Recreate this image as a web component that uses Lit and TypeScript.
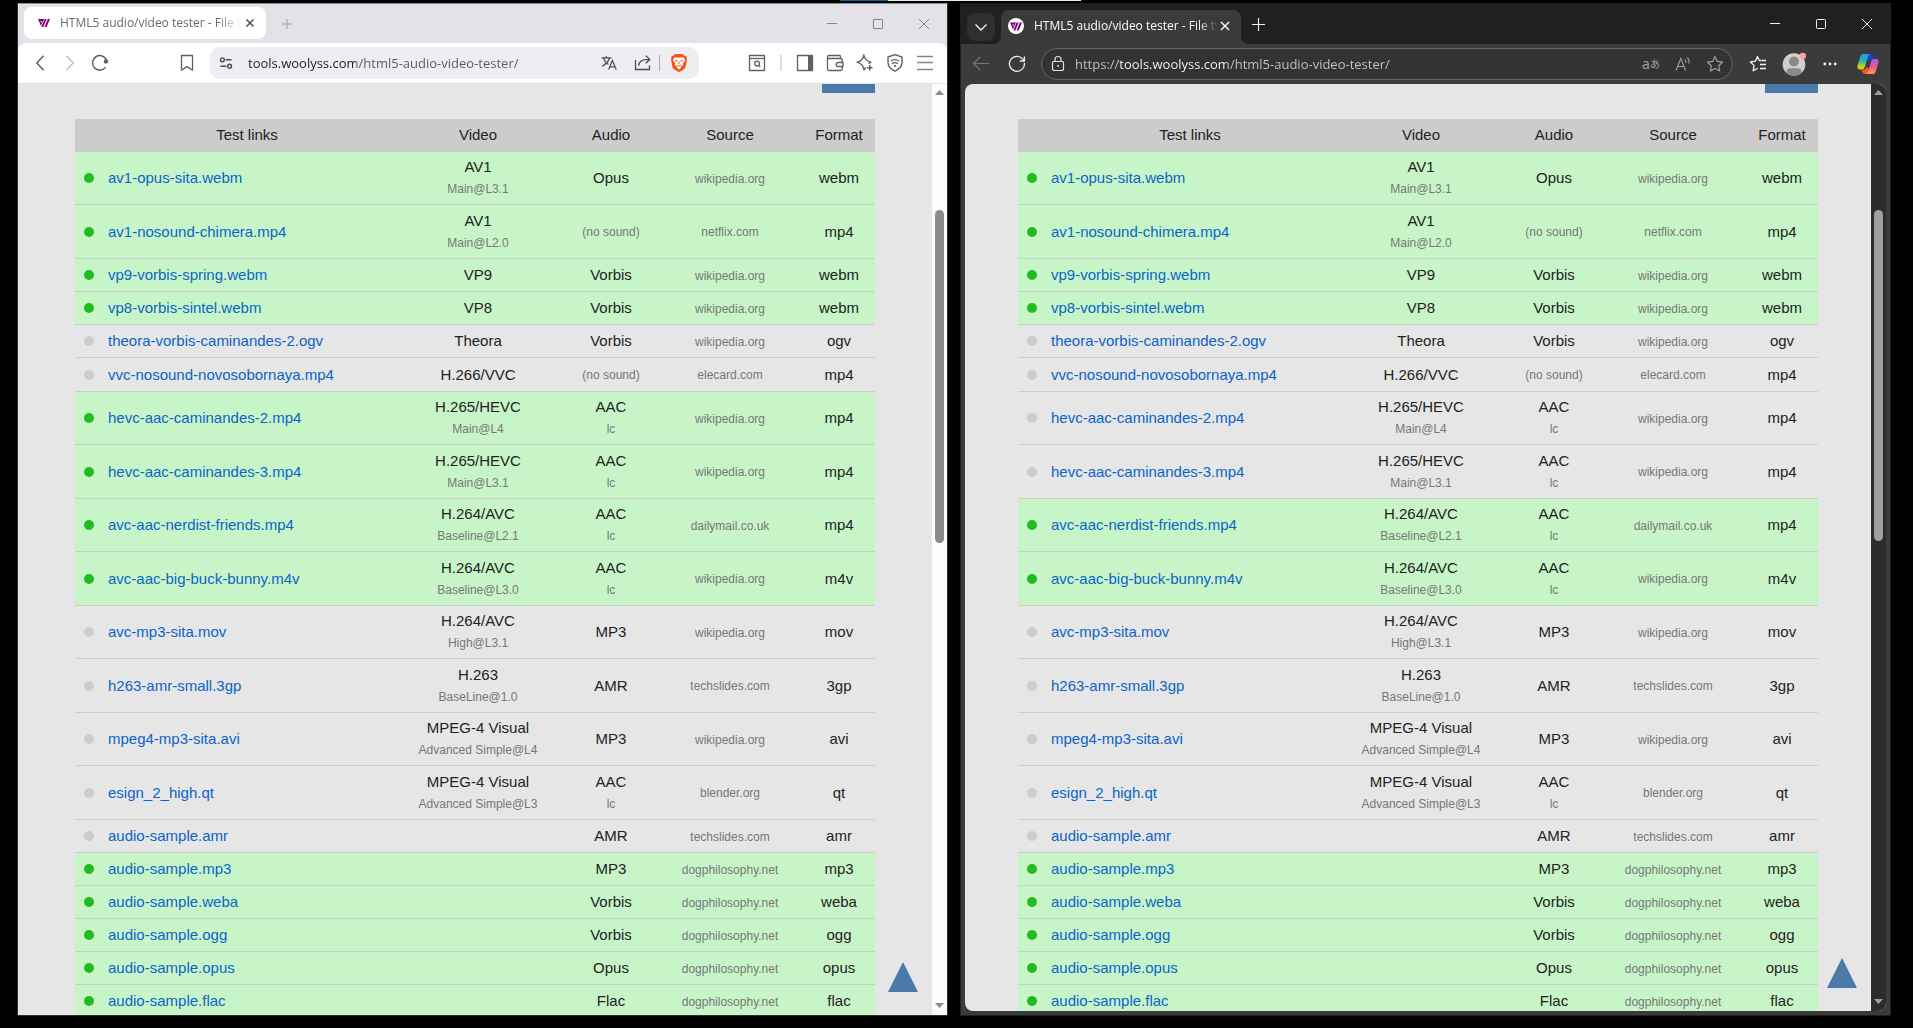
import { LitElement, html, css, svg, nothing } from "lit";
import { customElement, property } from "lit/decorators.js";
import { classMap } from "lit/directives/class-map.js";

interface Sample {
  file: string;
  video?: string;
  profile?: string;
  audio: string;
  audioNote?: string;
  source: string;
  format: string;
}

const SAMPLES: Sample[] = [
  { file: "av1-opus-sita.webm", video: "AV1", profile: "Main@L3.1", audio: "Opus", source: "wikipedia.org", format: "webm" },
  { file: "av1-nosound-chimera.mp4", video: "AV1", profile: "Main@L2.0", audio: "", source: "netflix.com", format: "mp4" },
  { file: "vp9-vorbis-spring.webm", video: "VP9", audio: "Vorbis", source: "wikipedia.org", format: "webm" },
  { file: "vp8-vorbis-sintel.webm", video: "VP8", audio: "Vorbis", source: "wikipedia.org", format: "webm" },
  { file: "theora-vorbis-caminandes-2.ogv", video: "Theora", audio: "Vorbis", source: "wikipedia.org", format: "ogv" },
  { file: "vvc-nosound-novosobornaya.mp4", video: "H.266/VVC", audio: "", source: "elecard.com", format: "mp4" },
  { file: "hevc-aac-caminandes-2.mp4", video: "H.265/HEVC", profile: "Main@L4", audio: "AAC", audioNote: "lc", source: "wikipedia.org", format: "mp4" },
  { file: "hevc-aac-caminandes-3.mp4", video: "H.265/HEVC", profile: "Main@L3.1", audio: "AAC", audioNote: "lc", source: "wikipedia.org", format: "mp4" },
  { file: "avc-aac-nerdist-friends.mp4", video: "H.264/AVC", profile: "Baseline@L2.1", audio: "AAC", audioNote: "lc", source: "dailymail.co.uk", format: "mp4" },
  { file: "avc-aac-big-buck-bunny.m4v", video: "H.264/AVC", profile: "Baseline@L3.0", audio: "AAC", audioNote: "lc", source: "wikipedia.org", format: "m4v" },
  { file: "avc-mp3-sita.mov", video: "H.264/AVC", profile: "High@L3.1", audio: "MP3", source: "wikipedia.org", format: "mov" },
  { file: "h263-amr-small.3gp", video: "H.263", profile: "BaseLine@1.0", audio: "AMR", source: "techslides.com", format: "3gp" },
  { file: "mpeg4-mp3-sita.avi", video: "MPEG-4 Visual", profile: "Advanced Simple@L4", audio: "MP3", source: "wikipedia.org", format: "avi" },
  { file: "esign_2_high.qt", video: "MPEG-4 Visual", profile: "Advanced Simple@L3", audio: "AAC", audioNote: "lc", source: "blender.org", format: "qt" },
  { file: "audio-sample.amr", audio: "AMR", source: "techslides.com", format: "amr" },
  { file: "audio-sample.mp3", audio: "MP3", source: "dogphilosophy.net", format: "mp3" },
  { file: "audio-sample.weba", audio: "Vorbis", source: "dogphilosophy.net", format: "weba" },
  { file: "audio-sample.ogg", audio: "Vorbis", source: "dogphilosophy.net", format: "ogg" },
  { file: "audio-sample.opus", audio: "Opus", source: "dogphilosophy.net", format: "opus" },
  { file: "audio-sample.flac", audio: "Flac", source: "dogphilosophy.net", format: "flac" },
];

const UNSUPPORTED = [
  "theora-vorbis-caminandes-2.ogv",
  "vvc-nosound-novosobornaya.mp4",
  "avc-mp3-sita.mov",
  "h263-amr-small.3gp",
  "mpeg4-mp3-sita.avi",
  "esign_2_high.qt",
  "audio-sample.amr",
];
const HEVC = ["hevc-aac-caminandes-2.mp4", "hevc-aac-caminandes-3.mp4"];

const icon = (body: unknown, size = 20) => html`<svg
  class="icon" width=${size} height=${size} viewBox="0 0 ${size} ${size}"
  fill="none" stroke="currentColor" aria-hidden="true">${body}</svg>`;

const favicon = svg`<g fill="#800080" stroke="none">
  <path d="M4 6H9.4L8.4 8.2H6.4L7.2 10.2L9 6H10L7 13Z"/>
  <path d="M10.6 6H12.6L9.4 14H7.4Z"/>
  <path d="M13.8 6H16L12.6 14H10.6Z"/></g>`;

const minimize = icon(svg`<path d="M5 9.5H15"/>`);
const maximize = icon(svg`<path d="M5.5 5.5H14.5V14.5H5.5Z"/>`);
const closeWindow = icon(svg`<path d="M5 5L15 15M15 5L5 15"/>`);
const closeTab = icon(svg`<path d="M4.5 4.5L11.5 11.5M11.5 4.5L4.5 11.5" stroke-width="1.5"/>`, 16);

const controls = css`
  :host {
    display: flex;
    flex-direction: column;
    min-width: 0;
    min-height: 0;
    font-family: "Open Sans", "Noto Sans", sans-serif;
  }
  * {
    box-sizing: border-box;
  }
  button {
    display: flex;
    align-items: center;
    justify-content: center;
    flex: none;
    margin: 0;
    padding: 0;
    border: 0;
    background: none;
    color: inherit;
    font: inherit;
  }
  .icon {
    display: block;
    flex: none;
  }
  .frame {
    flex: 1;
    min-height: 0;
    display: flex;
    flex-direction: column;
  }
  .titlebar,
  .toolbar,
  .address {
    display: flex;
    align-items: center;
  }
  .grow {
    flex: 1;
  }
  .title {
    flex: 1;
    white-space: nowrap;
    font-size: 12px;
    line-height: 18px;
  }
  .close-tab {
    width: 16px;
    height: 24px;
  }
  .window-button {
    width: 46px;
    height: 38px;
  }
  .url {
    flex: 1;
    min-width: 0;
    margin: 0;
    padding: 0;
    border: 0;
    outline: 0;
    font: inherit;
    font-size: 13px;
    line-height: 20px;
    color: transparent;
    -webkit-background-clip: text;
    background-clip: text;
  }
  test-page {
    flex: 1;
    min-height: 0;
  }
`;

@customElement("test-page")
export class TestPage extends LitElement {
  @property({ type: Array }) unsupported: string[] = [];
  @property({ type: Boolean, reflect: true }) dark = false;

  static styles = css`
    :host {
      display: flex;
      min-width: 0;
      background: #e6e6e6;
      color: #222;
      font-family: "Liberation Sans", Arial, sans-serif;
      font-size: 15px;
      line-height: 20px;
      --track: #fcfcfc;
      --thumb: #8b8b8b;
    }
    :host([dark]) {
      --track: #2c2c2c;
      --thumb: #9f9f9f;
    }
    .view {
      position: relative;
      flex: 1;
      min-width: 0;
      overflow: hidden;
    }
    .content {
      display: flex;
      flex-direction: column;
      width: 800px;
      max-width: 100%;
      margin: 0 auto;
    }
    .banner {
      align-self: flex-end;
      width: 53px;
      height: 9px;
      margin-bottom: 26px;
      background: #4b7aa8;
    }
    .samples {
      width: 100%;
      table-layout: fixed;
      border-collapse: separate;
      border-spacing: 0;
      text-align: center;
    }
    .col-mark {
      width: 28px;
    }
    .col-video {
      width: 174px;
    }
    .col-audio {
      width: 92px;
    }
    .col-source {
      width: 146px;
    }
    .col-format {
      width: 72px;
    }
    th {
      box-sizing: border-box;
      height: 33px;
      padding: 0 0 2px;
      background: #ccc;
      font-weight: 400;
    }
    td {
      box-sizing: border-box;
      height: 33px;
      padding: 0;
      border-bottom: 1px solid #ccc;
    }
    .tall td {
      height: 53px;
    }
    .tall:nth-child(even) td {
      height: 54px;
    }
    .last-short td {
      height: 34px;
    }
    .playable {
      background: #c8f5c8;
    }
    .dot {
      display: block;
      width: 10px;
      height: 10px;
      margin-left: 9px;
      border-radius: 50%;
      background: #ccc;
    }
    .playable .dot {
      background: #22bb22;
    }
    .samples .name {
      padding-left: 5px;
      text-align: left;
    }
    .name a {
      color: #0b64c8;
      text-decoration: none;
    }
    .note {
      color: #777;
      font-size: 12px;
    }
    .block {
      display: block;
      margin-top: 2px;
    }
    .top {
      position: absolute;
      right: 14px;
      bottom: 23px;
      display: block;
      width: 30px;
      height: 30px;
      background: #4b7aa8;
      clip-path: polygon(50% 0, 100% 100%, 0 100%);
    }
    .scrollbar {
      flex: none;
      display: flex;
      flex-direction: column;
      align-items: center;
      width: 15px;
      background: var(--track);
      color: var(--thumb);
    }
    .before {
      flex: 109;
    }
    .thumb {
      flex: 333;
      width: 9px;
      border-radius: 5px;
      background: var(--thumb);
    }
    .after {
      flex: 455;
    }
    .arrow {
      flex: none;
      display: block;
      width: 15px;
      height: 17px;
      fill: currentColor;
    }
  `;

  private row(s: Sample) {
    const classes = {
      playable: !this.unsupported.includes(s.file),
      tall: !!s.profile,
      "last-short": s.video === "H.266/VVC",
    };
    return html`<tr class=${classMap(classes)}>
      <td><span class="dot"></span></td>
      <td class="name"><a href="#${s.file}">${s.file}</a></td>
      <td>${s.video ?? nothing}${s.profile ? html`<span class="note block">${s.profile}</span>` : nothing}</td>
      <td>${s.audio || html`<span class="note">(no sound)</span>`}${s.audioNote
        ? html`<span class="note block">${s.audioNote}</span>`
        : nothing}</td>
      <td><span class="note">${s.source}</span></td>
      <td>${s.format}</td>
    </tr>`;
  }

  render() {
    return html`
      <div class="view">
        <div class="content">
          <div class="banner"></div>
          <table class="samples">
            <colgroup>
              <col class="col-mark" /><col /><col class="col-video" /><col class="col-audio" /><col
                class="col-source" /><col class="col-format" />
            </colgroup>
            <thead>
              <tr>
                <th></th>
                <th scope="col">Test links</th>
                <th scope="col">Video</th>
                <th scope="col">Audio</th>
                <th scope="col">Source</th>
                <th scope="col">Format</th>
              </tr>
            </thead>
            <tbody>
              ${SAMPLES.map((s) => this.row(s))}
            </tbody>
          </table>
        </div>
        <a class="top" href="#top" aria-label="Back to top"></a>
      </div>
      <div class="scrollbar">
        <svg class="arrow" viewBox="0 0 15 17"><path d="M3 11L7.5 6L12 11Z" /></svg>
        <div class="before"></div>
        <div class="thumb"></div>
        <div class="after"></div>
        <svg class="arrow" viewBox="0 0 15 17"><path d="M3 5L7.5 10L12 5Z" /></svg>
      </div>
    `;
  }
}

@customElement("light-window")
export class LightWindow extends LitElement {
  static styles = [
    controls,
    css`
      .frame {
        border: 1px solid #2e2e2e;
        border-top-color: #8d918d;
        background: #e3e2e8;
        color: #5f6068;
      }
      .titlebar {
        flex: none;
        height: 39px;
        padding-left: 6px;
      }
      .tab {
        display: flex;
        align-items: center;
        width: 242px;
        height: 32px;
        margin-bottom: 1px;
        padding: 0 8px 0 10px;
        border-radius: 8px;
        background: #fff;
        color: #67686e;
      }
      .title {
        margin: 0 0 0 6px;
        -webkit-mask-image: linear-gradient(90deg, #000 158px, transparent 180px);
        mask-image: linear-gradient(90deg, #000 158px, transparent 180px);
      }
      .close-tab {
        color: #4c4d52;
      }
      .new-tab {
        width: 42px;
        height: 32px;
        color: #b2b2b8;
      }
      .window-button {
        color: #85858b;
      }
      .toolbar {
        flex: none;
        height: 41px;
        padding: 0 7px;
        border-bottom: 1px solid #dfdfe2;
        border-radius: 8px 8px 0 0;
        background: #fff;
      }
      .tool {
        width: 30px;
        height: 30px;
      }
      .disabled {
        color: #c2c3c7;
      }
      .bookmark {
        margin: 0 8px 0 57px;
      }
      .address {
        flex: 1;
        min-width: 0;
        height: 32px;
        margin-right: 43px;
        padding: 0 5px 0 1px;
        border-radius: 10px;
        background: #eeedf2;
        color: #4a4b52;
      }
      .url {
        margin-left: 7px;
        background-image: linear-gradient(90deg, #1c1c20 107px, #56575f 107px);
      }
      .share {
        margin-left: 4px;
      }
      .line {
        width: 1px;
        height: 16px;
        margin: 0 4px 0 1px;
        background: #a9a9b0;
      }
      .separator {
        width: 2px;
        height: 16px;
        margin: 0 8px;
        background: #dddde2;
      }
    `,
  ];

  render() {
    return html`
      <div class="frame">
        <div class="titlebar">
          <div class="tab">
            ${icon(favicon)}
            <span class="title">HTML5 audio/video tester - File t</span>
            <button class="close-tab" aria-label="Close tab">${closeTab}</button>
          </div>
          <button class="new-tab" aria-label="New tab">${icon(svg`<path d="M10 5V15M5 10H15" stroke-width="1.4"/>`)}</button>
          <span class="grow"></span>
          <button class="window-button" aria-label="Minimize">${minimize}</button>
          <button class="window-button" aria-label="Maximize">${maximize}</button>
          <button class="window-button" aria-label="Close">${closeWindow}</button>
        </div>
        <div class="toolbar">
          <button class="tool" aria-label="Back">${icon(svg`<path d="M13.6 2.8L6.8 10L13.6 17.2" stroke-width="1.5"/>`)}</button>
          <button class="tool disabled" aria-label="Forward">${icon(svg`<path d="M6.4 2.8L13.2 10L6.4 17.2" stroke-width="1.5"/>`)}</button>
          <button class="tool" aria-label="Reload">
            ${icon(svg`<path d="M16.6 7.2A7.3 7.3 0 1 0 15.6 14.4" stroke-width="1.5"/><circle cx="16" cy="8.4" r="2.2" fill="currentColor" stroke="none"/>`)}
          </button>
          <button class="tool bookmark" aria-label="Bookmark this tab">
            ${icon(svg`<path d="M4.5 2.5H15.5V17.2L10 13.6L4.5 17.2Z" stroke-width="1.3" stroke-linejoin="round"/>`)}
          </button>
          <div class="address">
            <button class="tool" aria-label="Site information">
              ${icon(svg`<g stroke-width="1.4"><circle cx="6.4" cy="6.8" r="1.9"/><path d="M9.6 6.8H15.6M4.4 13.2H10.4"/><circle cx="13.6" cy="13.2" r="1.9"/></g>`)}
            </button>
            <input class="url" type="text" aria-label="Address" value="tools.woolyss.com/html5-audio-video-tester/" />
            <button class="tool" aria-label="Translate">
              ${icon(svg`<path d="M2.5 4.8H12.5M7.2 3V4.8M10.4 5C9.4 8.8 6.5 11.6 3 13.2M4.6 5.2C5.4 8 7.4 10.4 9.4 11.4M9.6 16.6L13.4 7.6L17.2 16.6M10.9 13.8H15.9" stroke-width="1.2"/>`)}
            </button>
            <button class="tool share" aria-label="Share">
              ${icon(svg`<path d="M2.5 7V16.5H16.5V12.6M5.6 12.8C5.8 8.4 9 6.2 16.4 6.4M12.8 2.6L16.8 6.4L12.8 10.2" stroke-width="1.3"/>`)}
            </button>
            <span class="line"></span>
            <button class="tool" aria-label="Shields">
              ${icon(svg`<path d="M6.2 1H13.8L15.4 2.8L17.4 3.2L18 6.2L16.4 14.6Q15 17 10 19Q5 17 3.6 14.6L2 6.2L2.6 3.2L4.6 2.8Z" fill="#fb4f14" stroke="none"/>
                <path d="M5 4.8L8 4.2L10 4.8L12 4.2L15 4.8L16 7.4L13.8 10.4L14.2 12.2L11.6 13.4L12.2 14.8L10 16.4L7.8 14.8L8.4 13.4L5.8 12.2L6.2 10.4L4 7.4Z" fill="#fff" stroke="none"/>
                <path d="M6 7.4L8.6 8.2M14 7.4L11.4 8.2M8 12L10 13L12 12M10 8.4V11" stroke="#fb4f14" stroke-width="1"/>`)}
            </button>
          </div>
          <button class="tool" aria-label="Search tabs">
            ${icon(svg`<path d="M2.5 2.5H17.5V17.5H2.5Z" stroke-width="1.3" stroke-linejoin="round"/><path d="M3 5.5H17" stroke-width="1.3"/><circle cx="10" cy="10.6" r="2.4" stroke-width="1.3"/><path d="M11.6 12.4L13.2 14" stroke-width="1.3"/>`)}
          </button>
          <span class="separator"></span>
          <button class="tool" aria-label="Sidebar">
            ${icon(svg`<path d="M2.5 2.5H17.5V17.5H2.5Z" stroke-width="1.3" stroke-linejoin="round"/><path d="M13 2.5H18V17.5H13Z" fill="currentColor" stroke="none"/>`)}
          </button>
          <button class="tool" aria-label="Wallet">
            ${icon(svg`<path d="M15.5 5.5V3.6Q15.5 2.5 14.5 2.5H3.8Q2.5 2.5 2.5 4V16Q2.5 17.5 4 17.5H15.6Q17.3 17.5 17.3 16V7Q17.3 5.5 15.6 5.5H3" stroke-width="1.3"/><path d="M18 9.5H13.2A2 2 0 0 0 13.2 13.5H18Z" fill="#fff" stroke-width="1.3"/>`)}
          </button>
          <button class="tool" aria-label="Assistant">
            ${icon(svg`<path d="M11 14.4L9 17Q8.4 11 2 9.2Q8 7.8 8.8 1.8Q9.8 7.8 16 9.2L13.4 10.6" stroke-width="1.3" stroke-linejoin="round"/><path d="M14.8 12V17.4M12.1 14.7H17.5" stroke-width="1.5"/>`)}
          </button>
          <button class="tool" aria-label="VPN">
            ${icon(svg`<path d="M10 1.6L17 4V9.8Q16.6 15.4 10 18.2Q3.4 15.4 3 9.8V4Z" stroke-width="1.4"/><path d="M5.8 8Q10 5.2 14.2 8M7 10.6Q10 8.6 13 10.6" stroke-width="1.3"/><circle cx="10" cy="13" r="1.1" fill="currentColor" stroke="none"/>`)}
          </button>
          <button class="tool" aria-label="Menu">
            ${icon(svg`<path d="M2 3.5H18M2 9.5H18M2 16.5H18" stroke="#85868c" stroke-width="1.6"/>`)}
          </button>
        </div>
        <test-page .unsupported=${UNSUPPORTED}></test-page>
      </div>
    `;
  }
}

@customElement("dark-window")
export class DarkWindow extends LitElement {
  static styles = [
    controls,
    css`
      .frame {
        border: 1px solid #1f1f1f;
        background: #3b3b3b;
        color: #f2f2f2;
      }
      .titlebar {
        flex: none;
        height: 40px;
        padding-left: 6px;
        background: #202020;
      }
      .tab-menu {
        width: 28px;
        height: 28px;
        margin: 6px 6px 0 0;
        border-radius: 8px;
        background: #2f2f2f;
      }
      .tab {
        position: relative;
        display: flex;
        align-items: center;
        align-self: flex-end;
        width: 240px;
        height: 34px;
        padding: 0 8px 2px 7px;
        border-radius: 8px 8px 0 0;
        background: #3b3b3b;
        color: #fff;
      }
      .tab::before,
      .tab::after {
        content: "";
        position: absolute;
        bottom: 0;
        width: 8px;
        height: 8px;
      }
      .tab::before {
        right: 100%;
        background: radial-gradient(circle at 0 0, transparent 8px, #3b3b3b 8px);
      }
      .tab::after {
        left: 100%;
        background: radial-gradient(circle at 100% 0, transparent 8px, #3b3b3b 8px);
      }
      .title {
        margin: 0 -4px 0 10px;
        -webkit-mask-image: linear-gradient(90deg, #000 164px, transparent 184px);
        mask-image: linear-gradient(90deg, #000 164px, transparent 184px);
      }
      .new-tab {
        width: 34px;
        height: 34px;
      }
      .toolbar {
        flex: none;
        height: 40px;
        padding: 0 4px 0 2px;
      }
      .tool {
        width: 36px;
        height: 32px;
      }
      .disabled {
        color: #777;
      }
      .address {
        flex: 1;
        min-width: 0;
        height: 32px;
        margin: 0 7px 0 6px;
        padding-right: 1px;
        border: 1px solid #686868;
        border-radius: 16px;
        background: #333;
        color: #a0a0a0;
      }
      .inner {
        width: 32px;
        height: 30px;
      }
      .lock {
        color: #e0e0e0;
      }
      .url {
        margin-left: 1px;
        background-image: linear-gradient(90deg, #c8c8c8 43px, #fff 43px 150px, #c8c8c8 150px);
      }
      .kana {
        font-family: "Noto Sans", "Noto Sans CJK JP", sans-serif;
        font-size: 14px;
        line-height: 16px;
      }
      .kana small {
        font-size: 10px;
      }
      .copilot {
        margin-left: 2px;
      }
      .page {
        flex: 1;
        min-height: 0;
        display: flex;
        margin: 0 4px 4px;
        border-radius: 8px;
        overflow: hidden;
      }
    `,
  ];

  render() {
    return html`
      <div class="frame">
        <div class="titlebar">
          <button class="tab-menu" aria-label="Tab actions">${icon(svg`<path d="M4.5 7.5L10 13L15.5 7.5" stroke-width="1.4"/>`)}</button>
          <div class="tab">
            ${icon(svg`<circle cx="8" cy="8" r="8" fill="#fff" stroke="none"/><g transform="translate(-2 -1.6)">${favicon}</g>`, 16)}
            <span class="title">HTML5 audio/video tester - File ty</span>
            <button class="close-tab" aria-label="Close tab">
              ${icon(svg`<path d="M4 4L12 12M12 4L4 12" stroke-width="1.4"/>`, 16)}
            </button>
          </div>
          <button class="new-tab" aria-label="New tab">${icon(svg`<path d="M10.5 4V17M4 10.5H17" stroke-width="1.2"/>`)}</button>
          <span class="grow"></span>
          <button class="window-button" aria-label="Minimize">${minimize}</button>
          <button class="window-button" aria-label="Maximize">
            ${icon(svg`<rect x="5.5" y="5.5" width="9" height="9" rx="1"/>`)}
          </button>
          <button class="window-button" aria-label="Close">${closeWindow}</button>
        </div>
        <div class="toolbar">
          <button class="tool disabled" aria-label="Back">
            ${icon(svg`<path d="M18 9.5H2.5M9 3L2.5 9.5L9 16" stroke-width="1.2"/>`)}
          </button>
          <button class="tool" aria-label="Refresh">
            ${icon(svg`<path d="M17.4 9A7.5 7.5 0 1 1 15.6 4.9L17 6.6M17.4 2.4V7H12.8" stroke-width="1.3"/>`)}
          </button>
          <div class="address">
            <button class="inner lock" aria-label="Site information">
              ${icon(svg`<path d="M4.5 8.5Q4.5 7.5 5.5 7.5H14.5Q15.5 7.5 15.5 8.5V14.5Q15.5 16.5 13.5 16.5H6.5Q4.5 16.5 4.5 14.5ZM7 7.5V5.5A3 3 0 0 1 13 5.5V7.5" stroke-width="1.2"/><circle cx="10" cy="12" r="1" fill="currentColor" stroke="none"/>`)}
            </button>
            <input class="url" type="text" aria-label="Address" value="https://tools.woolyss.com/html5-audio-video-tester/" />
            <button class="inner kana" aria-label="Translate">a<small>あ</small></button>
            <button class="inner" aria-label="Read aloud">
              ${icon(svg`<path d="M3 16.5L7.8 4.5L12.6 16.5M4.8 12.5H10.8M12 5.4Q13.2 7 12.8 9M14.2 3.4Q17 6.2 15.8 9.6" stroke-width="1.1"/>`)}
            </button>
            <button class="inner" aria-label="Add to favorites">
              ${icon(svg`<path d="M10 2.6L12.3 7.4L17.6 8.1L13.7 11.8L14.7 17L10 14.5L5.3 17L6.3 11.8L2.4 8.1L7.7 7.4Z" stroke-width="1.2" stroke-linejoin="round"/>`)}
            </button>
          </div>
          <button class="tool" aria-label="Favorites">
            ${icon(svg`<path d="M13 6.5H11.2L9.5 2.6L7.3 7.2L2.4 8L6 11.4L5.2 16.8L9.6 14.4M13.4 6.5H18M12 10.5H18M12 14.5H18" stroke-width="1.3" stroke-linejoin="round"/>`)}
          </button>
          <button class="tool" aria-label="Profile">
            ${icon(svg`<clipPath id="face"><circle cx="12" cy="12.5" r="11.3"/></clipPath><g stroke="none"><circle cx="12" cy="12.5" r="11.3" fill="#d2d0ce"/><g clip-path="url(#face)" fill="#8c8985"><circle cx="12" cy="9.5" r="5"/><path d="M4.5 24V20Q4.5 16.3 8 16.3H16Q19.5 16.3 19.5 20V24Z"/></g><circle cx="20.8" cy="4" r="3.2" fill="#fca0a0"/></g>`, 24)}
          </button>
          <button class="tool" aria-label="Settings and more">
            ${icon(svg`<g fill="currentColor" stroke="none"><circle cx="4.8" cy="10" r="1.4"/><circle cx="10" cy="10" r="1.4"/><circle cx="15.2" cy="10" r="1.4"/></g>`)}
          </button>
          <button class="tool copilot" aria-label="Copilot">
            ${icon(svg`<defs>
                <linearGradient id="cool" x1="0" y1="0" x2="0" y2="1"><stop offset="0" stop-color="#1a9df0"/><stop offset=".45" stop-color="#22b8a8"/><stop offset=".75" stop-color="#b4d030"/><stop offset="1" stop-color="#f8c400"/></linearGradient>
                <linearGradient id="warm" x1="0" y1="0" x2="0" y2="1"><stop offset="0" stop-color="#a45cf0"/><stop offset=".5" stop-color="#f0509a"/><stop offset="1" stop-color="#ffa040"/></linearGradient></defs>
              <g stroke="none">
                <path d="M12 2H15.4Q17 2 17.6 4L18.6 7.4H14.6Q12.6 7.4 12 9.4L10 5Z" fill="#1844c4"/>
                <path d="M6.8 2H13.8Q12.4 2.8 11.8 5L9 14.6Q8.2 17.4 6 17.4H3.8Q.6 17.4 1.6 13.6L4.2 4.6Q4.9 2 6.8 2Z" fill="url(#cool)"/>
                <path d="M12 22H8.6Q7 22 6.4 20L5.6 17.4H8Q10 17 11 14.6L14 19Z" fill="#f05a28"/>
                <path d="M17.2 22H10.2Q11.6 21.2 12.2 19L15 9.6Q15.8 7 18 7H20.2Q23.4 7 22.4 10.6L19.8 19.4Q19.1 22 17.2 22Z" fill="url(#warm)"/></g>`, 24)}
          </button>
        </div>
        <div class="page"><test-page dark .unsupported=${[...UNSUPPORTED, ...HEVC]}></test-page></div>
      </div>
    `;
  }
}

@customElement("app-root")
export class AppRoot extends LitElement {
  static styles = css`
    :host {
      display: block;
    }
    .desktop {
      box-sizing: border-box;
      display: flex;
      flex-direction: column;
      height: 100vh;
      padding-bottom: 12px;
      background: #000;
    }
    .strip {
      display: flex;
      justify-content: center;
      flex: none;
      height: 3px;
      padding-left: 8px;
    }
    .accent {
      width: 48px;
      height: 1px;
      background: #0f62b0;
    }
    .pale {
      width: 193px;
      height: 1px;
      background: #e6efe6;
    }
    .windows {
      flex: 1;
      min-height: 0;
      display: grid;
      grid-template: minmax(0, 1fr) / repeat(2, minmax(0, 1fr));
      gap: 12px;
      padding: 0 22px 0 17px;
    }
  `;

  render() {
    return html`
      <div class="desktop">
        <div class="strip"><span class="accent"></span><span class="pale"></span></div>
        <div class="windows">
          <light-window></light-window>
          <dark-window></dark-window>
        </div>
      </div>
    `;
  }
}
